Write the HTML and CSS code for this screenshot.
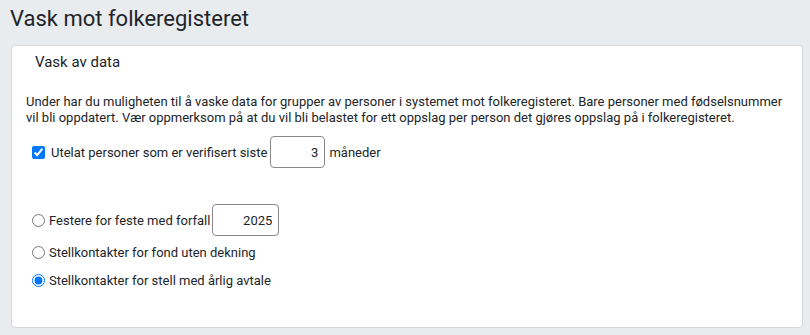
FILE: index.html
```html
<!DOCTYPE html>
<html>
<head>
	<meta charset="UTF-8">
	<title>Vask mot folkeregisteret</title>
	<link rel="stylesheet" href="styles.css">
</head>
<body>
	<h1 class="pageTitle">Vask mot folkeregisteret</h1>

	<div class="card">
		<div class="cardHeader">Vask av data</div>

		<div class="cardBody">
			<p class="intro">Under har du muligheten til å vaske data for grupper av personer i systemet mot folkeregisteret. Bare personer med fødselsnummer vil bli oppdatert. Vær oppmerksom på at du vil bli belastet for ett oppslag per person det gjøres oppslag på i folkeregisteret.</p>

			<div class="row checkRow">
				<input type="checkbox" class="check" checked>
				<label>Utelat personer som er verifisert siste</label>
				<input type="text" class="numBox monthBox" value="3">
				<label>måneder</label>
			</div>

			<div class="options">
				<div class="row firstOption">
					<input type="radio" name="grp" class="radio">
					<label>Festere for feste med forfall</label>
					<input type="text" class="numBox yearBox" value="2025">
				</div>
				<div class="row">
					<input type="radio" name="grp" class="radio">
					<label>Stellkontakter for fond uten dekning</label>
				</div>
				<div class="row">
					<input type="radio" name="grp" class="radio" checked>
					<label>Stellkontakter for stell med årlig avtale</label>
				</div>
			</div>
		</div>
	</div>
</body>
</html>
```

FILE: styles.css
```css
body{
	margin:0;
	background:#e9ecef;
	font-family: Roboto, "Liberation Sans", sans-serif;
	color:#212529;
	width:810px;
	height:335px;
	overflow:hidden;
}

.pageTitle{
	font-size:22px;
	font-weight:400;
	margin:0;
	padding:6px 0 0 10px;
	height:39px;
	box-sizing:border-box;
	color:#212529;
}

.card{
	margin:6px 0 0 11px;
	width:792px;
	height:283px;
	box-sizing:border-box;
	background:#fff;
	border:1px solid #d5d8dc;
	border-radius:4px;
}

.cardHeader{
	font-size:15px;
	padding:7px 0 0 23px;
	height:30px;
	box-sizing:border-box;
}

.cardBody{
	padding:0 14px;
}

.intro{
	font-size:13px;
	line-height:16px;
	margin:18px 0 0 0;
}

.row{
	display:flex;
	align-items:center;
	font-size:13px;
	gap:4px;
}

.row label{
	white-space:nowrap;
}

.checkRow{
	margin-top:10px;
	height:32px;
}

.checkRow .numBox{
	margin-left:-1px;
}

.check{
	margin:0 2px 0 6px;
	width:13px;
	height:13px;
	accent-color:#0075ff;
}

.radio{
	margin:0 0 0 6px;
	width:13px;
	height:13px;
	accent-color:#0075ff;
}

.numBox{
	height:32px;
	box-sizing:border-box;
	border:1px solid #8a8a8a;
	border-radius:4px;
	text-align:right;
	font-family: Roboto, "Liberation Sans", sans-serif;
	font-size:13px;
	padding:0 6px;
	color:#212529;
}

.monthBox{
	width:55px;
}

.yearBox{
	width:67px;
	margin-left:-2px;
}

.options{
	margin-top:36px;
}

.options .row{
	height:28px;
}

.options .firstOption{
	height:32px;
	margin-bottom:2px;
}
```
